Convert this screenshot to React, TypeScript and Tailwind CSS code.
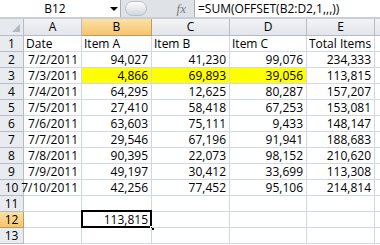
const cols = [
  { key: "A", w: 58 },
  { key: "B", w: 70 },
  { key: "C", w: 78 },
  { key: "D", w: 77 },
  { key: "E", w: 68 },
  { key: "F", w: 40 },
];

type Row = { n: number; cells: string[]; hl?: boolean };

const rows: Row[] = [
  { n: 1, cells: ["Date", "Item A", "Item B", "Item C", "Total Items"] },
  { n: 2, cells: ["7/2/2011", "94,027", "41,230", "99,076", "234,333"] },
  { n: 3, cells: ["7/3/2011", "4,866", "69,893", "39,056", "113,815"], hl: true },
  { n: 4, cells: ["7/4/2011", "64,295", "12,625", "80,287", "157,207"] },
  { n: 5, cells: ["7/5/2011", "27,410", "58,418", "67,253", "153,081"] },
  { n: 6, cells: ["7/6/2011", "63,603", "75,111", "9,433", "148,147"] },
  { n: 7, cells: ["7/7/2011", "29,546", "67,196", "91,941", "188,683"] },
  { n: 8, cells: ["7/8/2011", "90,395", "22,073", "98,152", "210,620"] },
  { n: 9, cells: ["7/9/2011", "49,197", "30,412", "33,699", "113,308"] },
  { n: 10, cells: ["7/10/2011", "42,256", "77,452", "95,106", "214,814"] },
  { n: 11, cells: ["", "", "", "", ""] },
  { n: 12, cells: ["", "113,815", "", "", ""] },
  { n: 13, cells: ["", "", "", "", ""] },
];

const font = { fontFamily: "'Open Sans', 'Liberation Sans', sans-serif" };

export default function App() {
  return (
    <div className="w-[380px] h-[245px] overflow-hidden bg-white text-[12px] text-black" style={font}>
      {/* formula bar */}
      <div className="flex h-[19px] bg-[#dfe3e8] border-b-2 border-[#c9ced6]">
        <div className="relative w-[121px] bg-white border-r border-[#a5acb5] flex items-center">
          <span className="w-[110px] text-center leading-none">B12</span>
          <span className="absolute left-[110px] top-[7px] w-0 h-0 border-l-[4px] border-r-[4px] border-t-[4px] border-l-transparent border-r-transparent border-t-black" />
        </div>
        <div className="relative w-[73px] flex items-center">
          <div className="ml-[4px] h-[15px] w-[22px] rounded-full bg-gradient-to-b from-white to-[#d2d7de] border border-[#b7bec8]" />
          <span className="ml-auto mr-[8px] italic text-[#7b7b7b] text-[13px] leading-none" style={{ fontFamily: "'Liberation Serif', serif" }}>
            fx
          </span>
        </div>
        <div className="flex-1 bg-white border-l border-[#a5acb5] flex items-center pl-[3px] leading-none">
          =SUM(OFFSET(B2:D2,1,,,))
        </div>
      </div>

      {/* column headers */}
      <div className="flex h-[17px]">
        <div className="w-[24px] shrink-0 bg-[#e6e9ee] border-r border-b border-[#b6bcc6] relative">
          <span className="absolute right-[3px] bottom-[3px] w-0 h-0 border-b-[8px] border-l-[8px] border-b-[#b4b9c0] border-l-transparent" />
        </div>
        {cols.map((c) => (
          <div
            key={c.key}
            style={{ width: c.w }}
            className={
              c.key === "B"
                ? "shrink-0 flex items-center justify-center border-r border-b border-[#c29b4b] bg-gradient-to-b from-[#fbe1a6] to-[#f5c46e]"
                : "shrink-0 flex items-center justify-center border-r border-b border-[#b6bcc6] bg-gradient-to-b from-[#f2f3f5] to-[#e2e5ea]"
            }
          >
            {c.key === "F" ? "" : c.key}
          </div>
        ))}
      </div>

      {/* rows */}
      {rows.map((r) => (
        <div key={r.n} className="flex h-[16px]">
          <div
            className={
              r.n === 12
                ? "w-[24px] shrink-0 flex items-center justify-center border-r border-b border-[#c29b4b] bg-gradient-to-b from-[#fbe1a6] to-[#f5c46e]"
                : "w-[24px] shrink-0 flex items-center justify-center border-r border-b border-[#b6bcc6] bg-[#e8ebef]"
            }
          >
            {r.n}
          </div>
          {cols.map((c, i) => {
            const v = r.cells[i] ?? "";
            const left = r.n === 1 || i === 5;
            const yellow = r.hl && i >= 1 && i <= 3;
            const selected = r.n === 12 && i === 1;
            return (
              <div
                key={c.key}
                style={{ width: c.w }}
                className={
                  "shrink-0 relative flex items-center border-r border-b border-[#d0d7e5] leading-none whitespace-nowrap " +
                  (left ? "justify-start pl-[2px] " : "justify-end pr-[3px] ") +
                  (yellow ? "bg-[#ffff00]" : "")
                }
              >
                {v}
                {selected && (
                  <>
                    <span className="absolute -left-[1px] -top-[2px] -right-[1px] -bottom-[1px] border-2 border-black pointer-events-none" />
                    <span className="absolute -right-[4px] -bottom-[4px] w-[5px] h-[5px] bg-black border border-white" />
                  </>
                )}
              </div>
            );
          })}
        </div>
      ))}
    </div>
  );
}
